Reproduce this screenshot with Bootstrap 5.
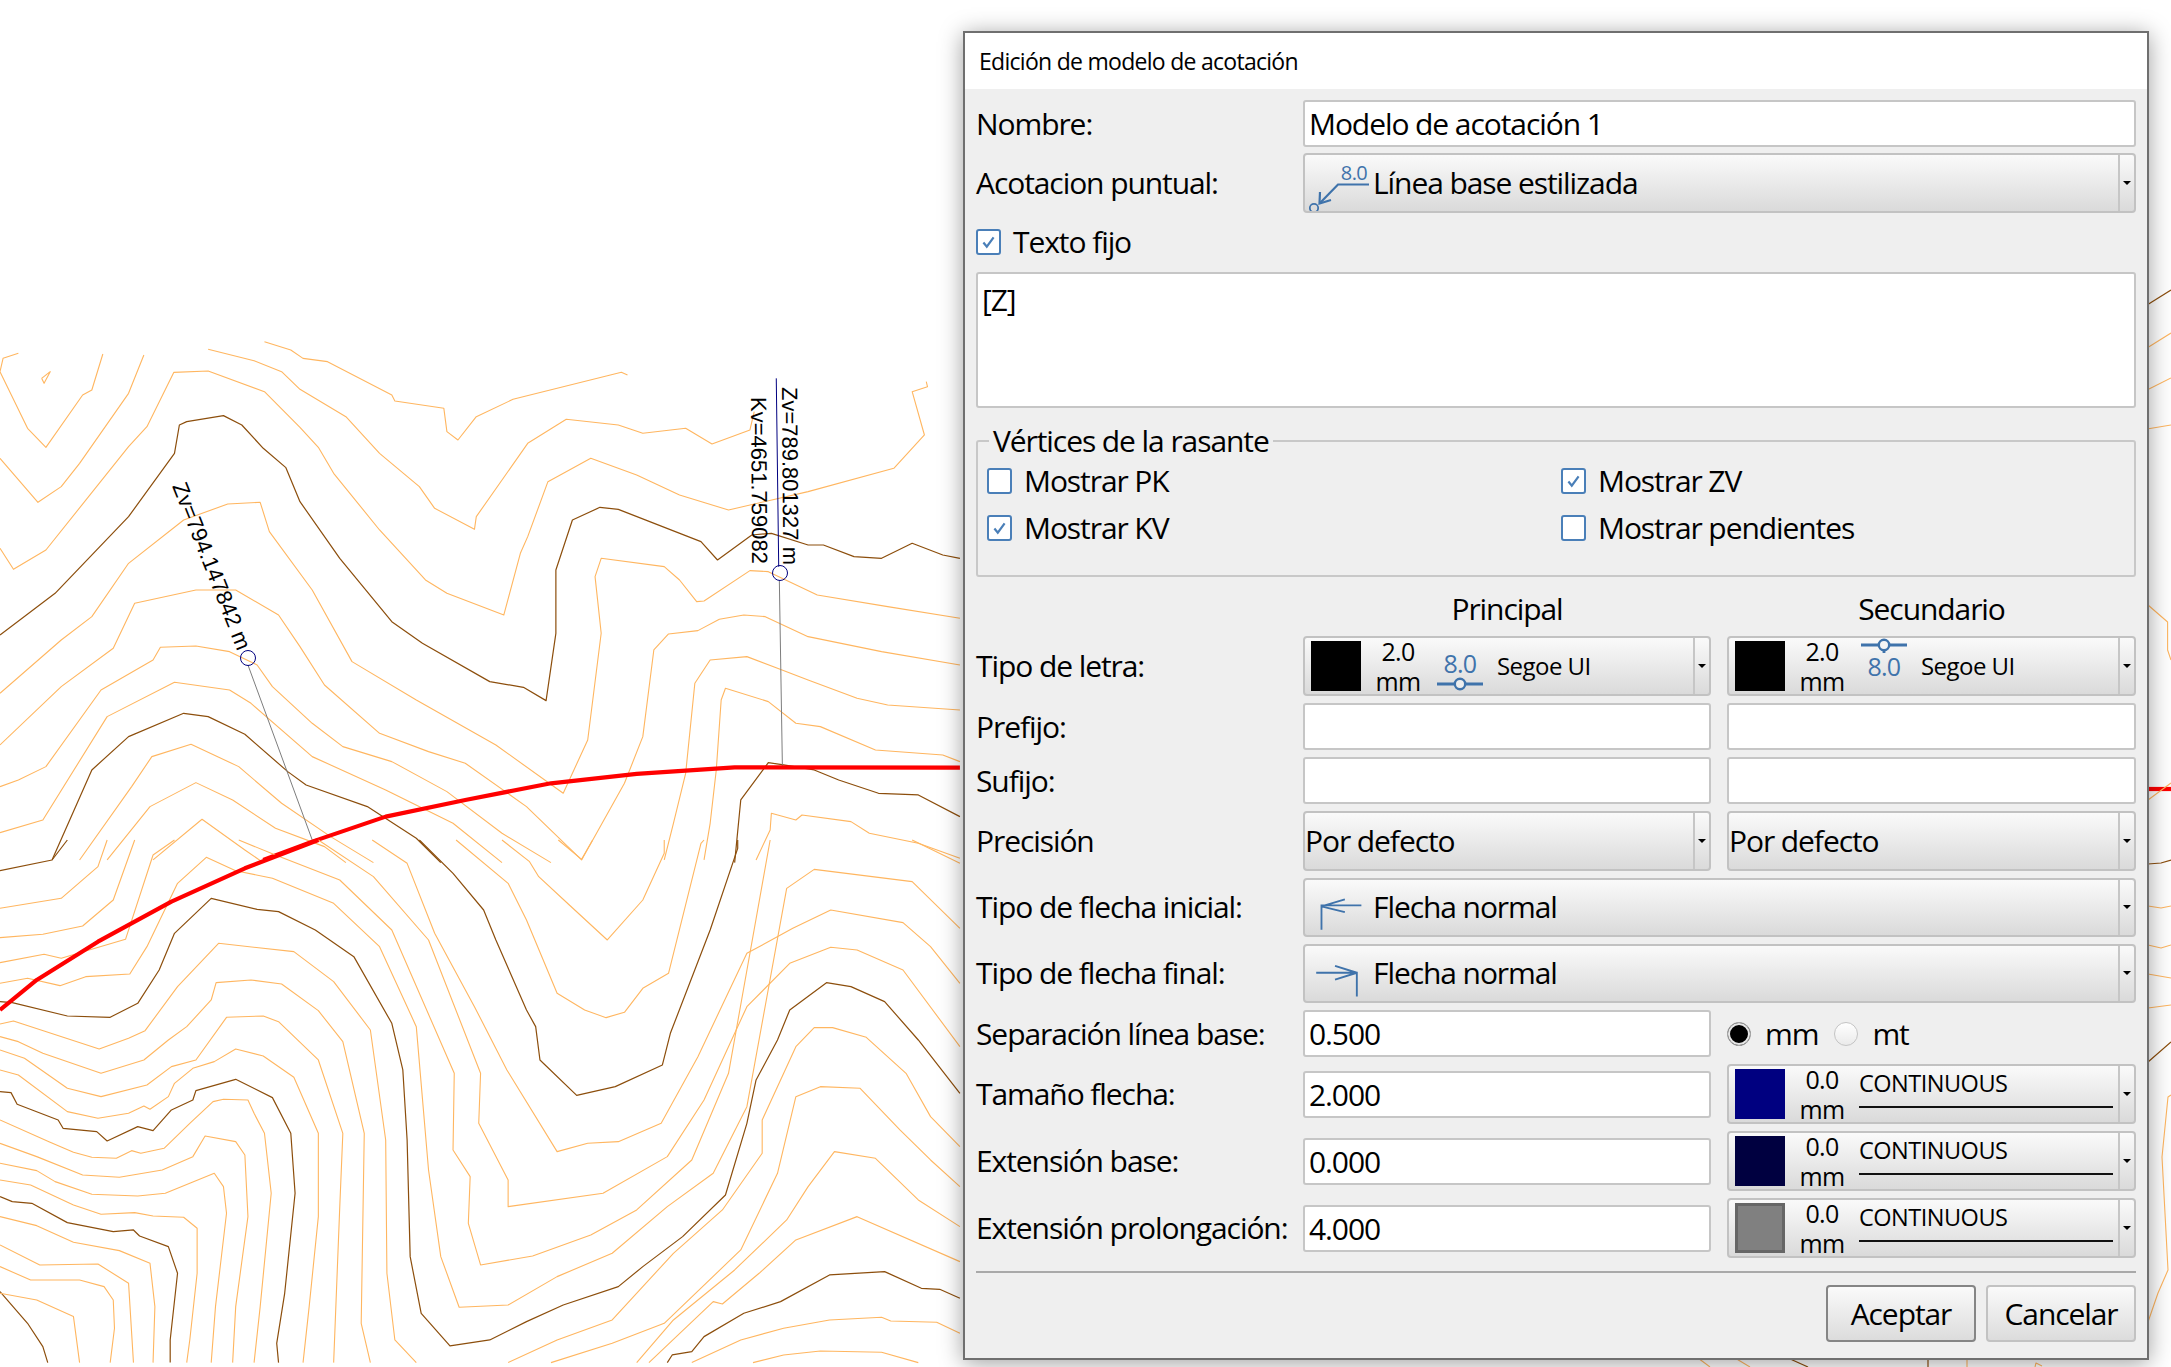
<!DOCTYPE html>
<html lang="es">
<head>
  <meta charset="UTF-8" />
  <title>Edición de modelo de acotación</title>
  <link href="https://cdn.jsdelivr.net/npm/bootstrap@5.3.2/dist/css/bootstrap.min.css" rel="stylesheet">
  <style>
    html, body { margin: 0; height: 1367px; background: #fff; overflow: hidden; }
    body { position: relative; font-family: "Open Sans", "Noto Sans", sans-serif; color: #000; }

    /* plano de fondo */
    .map-canvas { position: absolute; left: 0; top: 0; width: 2171px; height: 1367px; }
    .map-canvas polyline, .map-canvas line { fill: none; vector-effect: non-scaling-stroke; stroke-linejoin: round; }
    .cn { stroke: #ffb660; stroke-width: 1.1; }
    .cb { stroke: #8c4e0c; stroke-width: 1.2; }
    .red-axis { stroke: #f00; stroke-width: 4.2; }
    .leader { stroke: #7d7d7d; stroke-width: 1; }
    .leader-navy { stroke: #000080; stroke-width: 1; }
    .map-txt { font-family: "Liberation Sans", Arial, sans-serif; font-size: 22px; fill: #000; }

    /* ventana */
    .win-shell { position: absolute; left: 963px; top: 31px; width: 1186px; height: 1329px; background: #efefef; border: 2px solid #6f6f6f; box-shadow: 0 3px 22px rgba(0,0,0,.38); }
    .win-title { height: 56px; background: #fff; padding-left: 14px; font-size: 23px; letter-spacing: -.72px; }
    .win-body { padding: 11px 11px 0; font-size: 30px; letter-spacing: -1.08px; line-height: 1; }
    .top-row { display: flex; align-items: center; }
    .top-row > .fld-label { width: 327px; flex: none; }
    .h-input { height: 47px; }
    .h-combo { height: 60px; }

    .form-control.qt-input { height: 100%; min-height: 0; padding: 0 4px; border: 2px solid #c6c6c6; border-radius: 3px; font-size: 30px; letter-spacing: -1.08px; line-height: 1; color: #000; background: #fff; box-shadow: none; }
    .form-control.qt-text { height: 136px; padding: 11px 4px; resize: none; }

    .btn.combo-btn { width: 100%; height: 100%; padding: 0; border: 2px solid #c2c2c2; border-radius: 4px; background: linear-gradient(#fafafa, #dadada); color: #000; font-size: 30px; letter-spacing: -1.08px; line-height: 1; text-align: left; overflow: hidden; }
    .combo-arrow { margin-left: auto; width: 16px; height: 100%; flex: none; border-left: 2px solid #c6c6c6; display: flex; align-items: center; justify-content: center; }
    .combo-arrow::after { content: ""; border-top: 4px solid #000; border-left: 4px solid transparent; border-right: 4px solid transparent; }
    .combo-plain { padding-left: 4px; }
    .icon-box { width: 68px; flex: none; height: 100%; }
    .smp-swatch { width: 50px; height: 50px; flex: none; margin-left: 6px; }
    .sw-black { background: #000; }
    .sw-navy { background: #000080; }
    .sw-dark { background: #000040; }
    .sw-gray { background: #808080; border: 3px solid #666; }
    .size-stack { width: 74px; flex: none; text-align: center; font-size: 25px; letter-spacing: -.7px; line-height: 30px; }
    .font-name { font-size: 24px; letter-spacing: -.55px; margin-left: 12px; }
    .lt-cell { flex: 1; height: 100%; padding: 4px 5px 0 0; font-size: 23.5px; letter-spacing: -.5px; line-height: 26px; }
    .lt-stroke { height: 2px; background: #111; margin-top: 10px; }

    .form-check-input.qt-check { width: 25px; height: 26px; margin: 0; flex: none; border: 2px solid #4a7fb8; border-radius: 3px; background-color: #fff; }
    .form-check-input.qt-check:checked { background-color: #fff; background-size: 80%; background-image: url("data:image/svg+xml,%3csvg xmlns='http://www.w3.org/2000/svg' viewBox='0 0 20 20'%3e%3cpath fill='none' stroke='%234a7fb8' stroke-width='2.6' d='M4 10l4 5 8-11'/%3e%3c/svg%3e"); }
    .form-check-input.qt-radio { width: 24px; height: 24px; margin: 0; flex: none; border: 1px solid #c4c4c4; background: linear-gradient(#fff, #eaeaea); }
    .form-check-input.qt-radio:checked { border: 1px solid #aaa; background: #000; box-shadow: inset 0 0 0 2px #e6e6e6; }

    .rasante-box { border: 2px solid #c8c8c8; border-radius: 3px; margin: 18px 0 0; padding: 0 0 0 9px; height: 151px; }
    .rasante-box legend { float: none; width: auto; margin: 0 0 0 2px; padding: 0 4px; font-size: 30px; letter-spacing: -1.08px; line-height: 30px; }
    .chk-line { display: flex; align-items: center; gap: 12px; height: 26px; }

    .lower-grid { display: grid; margin-top: 12px; grid-template-columns: 327px 408px 16px 1fr; grid-template-rows: 40px 60px 47px 47px 60px 58.5px 59.5px 47px 60px 60px 60px; row-gap: 7px; align-items: center; }
    .col-a { grid-column: 2; }
    .col-b { grid-column: 4; }
    .col-ab { grid-column: 2 / 5; }
    .fill-cell { height: 100%; }

    hr.win-sep { margin: 13px 0 12px; border: 0; border-top: 2px solid #a9a9a9; opacity: 1; }
    .btn.qt-btn { width: 150px; height: 57px; padding: 0; border: 2px solid #c2c2c2; border-radius: 4px; background: linear-gradient(#fafafa, #dcdcdc); color: #000; font-size: 30px; letter-spacing: -1.08px; line-height: 1; }
    .btn.qt-btn.qt-default { border-color: #858585; }
  </style>
</head>
<body>

  <svg class="map-canvas" viewBox="0 0 2171 1367">
    <!-- tramo superior -->
    <g transform="translate(0 340) scale(.6122 .3333)">
      <polyline class="cn" points="0,95 45,265 75,322 135,165 150,150 168,42"/>
      <polyline class="cn" points="68,115 82,95 72,130 68,115"/>
      <polyline class="cn" points="30,40 5,55 0,95"/>
      <polyline class="cn" points="0,355 62,487 100,440 130,370 210,160 235,45"/>
      <polyline class="cn" points="0,625 22,688 75,630 210,320 240,260 284,97 340,93 432,155 490,262 520,322 545,400 620,570 695,720 730,760 823,825 850,640 862,590 895,425 965,355 1040,405 1110,465 1190,510 1320,455 1460,385 1510,285 1490,155 1515,140 1513,125"/>
      <polyline class="cn" points="340,28 415,62 460,95 490,148 565,230 620,340 685,440 710,505 775,568 778,530 862,310 925,238 1010,255 1050,280 1120,265 1163,312 1225,270 1232,215"/>
      <polyline class="cn" points="432,5 475,30 495,55 535,65 640,165 645,183 725,205 730,275 748,300 778,230 838,178 1015,97 1025,105"/>
      <polyline class="cb" points="0,885 90,760 210,530 285,340 293,255 305,245 365,227 395,255 430,325 467,383 490,485 555,655 640,845 690,910 800,1025 855,1042 892,1082 908,880 908,690 935,540 980,502 1010,508 1145,605 1172,660 1228,585 1260,580 1320,615 1345,615 1395,650 1440,655 1490,610 1540,645 1568,655"/>
      <polyline class="cn" points="0,1060 100,900 150,830 210,670 300,540 372,492 425,487 440,575 510,750 575,965 680,1080 810,1215 920,1360 960,1200 982,880 972,710 982,655 1085,680 1110,720 1138,785 1150,783 1225,692 1255,695 1335,765 1450,800 1568,835"/>
      <polyline class="cn" points="0,1215 100,1040 185,925 220,790 320,750 385,750 455,825 490,920 530,1035 620,1180 700,1235 760,1270 860,1400 950,1560 1020,1330 1050,1190 1068,930 1092,882 1140,872 1175,838 1215,825 1250,830 1320,890 1440,935 1568,975"/>
      <polyline class="cn" points="0,1340 30,1320 75,1280 165,1050 250,960 262,922 320,918 375,935 420,975 445,1040 510,1150 560,1220 640,1265 730,1355 820,1480 900,1568"/>
      <polyline class="cn" points="0,1478 70,1440 175,1130 285,1027 375,1050 410,1090 510,1250 630,1350 740,1450 820,1568"/>
      <polyline class="cb" points="85,1560 150,1290 210,1190 300,1120 340,1130 400,1183 470,1295 500,1335 600,1400 680,1495 720,1568"/>
      <polyline class="cn" points="130,1560 215,1340 248,1250 312,1213 390,1280 460,1390 540,1490 610,1568"/>
      <polyline class="cn" points="175,1560 245,1400 320,1328 380,1380 450,1465 530,1520 565,1568"/>
      <polyline class="cn" points="250,1560 330,1438 400,1530 430,1568"/>
      <polyline class="cn" points="1085,1560 1100,1450 1120,1300 1135,1030 1160,960 1220,950 1270,985 1320,1020 1400,1075 1450,1095 1568,1110"/>
      <polyline class="cn" points="1150,1560 1160,1450 1170,1290 1178,1080 1185,1045 1255,1085 1300,1150 1340,1160 1430,1230 1540,1245 1568,1265"/>
      <polyline class="cb" points="1200,1568 1210,1380 1255,1268 1280,1275 1330,1290 1370,1320 1435,1360 1500,1365 1568,1430"/>
      <polyline class="cn" points="1235,1560 1258,1470 1260,1420 1300,1440 1310,1425 1390,1445 1420,1480 1500,1510 1568,1555"/>
      <polyline class="leader" points="405,975 510,1500"/>
      <polyline class="leader" points="1273,720 1278,1280"/>
      <polyline class="leader-navy" points="1268,115 1272,680"/>
      <polyline class="red-axis" points="430,1560 510,1505 630,1430 760,1380 900,1330 1040,1302 1200,1282 1568,1283"/>
    </g>
    <!-- tramo inferior -->
    <g transform="translate(0 840) scale(.6122 .3333)">
      <polyline class="cb" points="0,92 85,60 110,0"/>
      <polyline class="cn" points="0,205 100,175 160,80 175,0"/>
      <polyline class="cn" points="0,293 70,283 135,258 185,180 220,0"/>
      <polyline class="cn" points="0,368 72,343 100,355 205,298 250,45 285,0"/>
      <polyline class="cn" points="0,430 45,415 98,437 140,410 212,402 240,320 290,130 337,52 385,92 445,115 545,190 620,320 680,560 700,990 720,1250 750,1402 830,1395 910,1310 1000,1240 1090,1100 1165,1000 1220,800 1285,145 1330,88 1490,125 1568,265"/>
      <polyline class="cb" points="0,485 20,488 110,528 180,532 225,490 260,390 285,280 345,175 420,208 455,215 515,270 578,350 640,550 658,690 665,900 670,1250 688,1420 735,1518 800,1500 860,1445 920,1395 1010,1340 1050,1280 1115,1190 1185,1065 1220,850 1235,720 1270,600 1290,510 1350,428 1390,440 1445,485 1500,600 1568,760"/>
      <polyline class="cn" points="0,552 22,543 162,627 210,595 237,572 290,440 357,310 480,335 545,425 605,570 630,900 632,1300 645,1500 680,1568"/>
      <polyline class="cn" points="0,590 30,605 70,640 165,700 235,660 275,600 305,560 345,480 353,428 410,420 460,432 520,512 560,605 595,880 590,1450 605,1568"/>
      <polyline class="cn" points="0,630 40,655 110,745 165,770 240,735 280,680 320,660 370,532 430,528 455,545 520,660 560,880 555,1100 545,1568"/>
      <polyline class="cn" points="0,690 30,705 110,815 160,835 210,820 235,798 245,808 275,770 285,730 315,685 350,665 385,627 430,648 480,712 520,880 520,1130 505,1400 495,1568"/>
      <polyline class="cb" points="0,755 18,758 28,793 95,840 103,865 158,875 175,903 225,860 250,872 280,810 315,780 320,752 385,718 445,773 475,880 482,1060 465,1360 452,1510 455,1568"/>
      <polyline class="cn" points="0,840 80,905 120,937 150,952 190,955 215,932 230,940 268,925 310,850 348,785 365,778 405,780 415,820 432,880 443,1060 425,1400 415,1568"/>
      <polyline class="cn" points="0,910 60,950 135,1005 195,1012 265,990 315,950 335,888 385,905 400,945 405,1130 385,1400 380,1568"/>
      <polyline class="cn" points="0,970 60,992 90,1025 150,1063 225,1068 270,1060 350,1000 365,1040 370,1120 352,1400 345,1568"/>
      <polyline class="cn" points="0,1020 50,1035 120,1095 165,1123 220,1118 250,1128 300,1132 322,1165 322,1300 310,1500 305,1568"/>
      <polyline class="cb" points="0,1070 20,1085 52,1090 110,1148 185,1175 218,1170 228,1188 275,1220 290,1300 278,1500 278,1568"/>
      <polyline class="cn" points="0,1130 60,1157 120,1207 195,1232 245,1270 253,1400 250,1568"/>
      <polyline class="cn" points="0,1215 65,1275 160,1272 210,1330 218,1568"/>
      <polyline class="cn" points="0,1280 50,1320 130,1320 170,1340 185,1380 187,1465 180,1568"/>
      <polyline class="cb" points="0,1355 45,1450 70,1520 78,1568"/>
      <polyline class="cn" points="0,1360 60,1380 120,1430 130,1568"/>
      <polyline class="cb" points="685,0 740,100 790,210 810,300 860,510 875,560 882,660 942,766 1005,740 1082,675 1095,580 1160,270 1205,25 1205,0"/>
      <polyline class="cn" points="745,0 830,130 860,240 910,460 955,510 990,533 1020,517 1050,445 1092,400 1145,10 1150,0"/>
      <polyline class="cn" points="820,0 865,65 880,110 930,195 992,300 1050,180 1085,40 1085,0"/>
      <polyline class="cn" points="912,0 950,58 968,0"/>
      <polyline class="cn" points="608,0 665,70 710,280 775,500 828,690 910,935 960,910 1010,905 1080,850 1140,650 1220,340 1295,265 1357,210 1475,248 1520,320 1568,430"/>
      <polyline class="cn" points="520,0 610,110 700,300 785,700 782,850 830,1020 830,1100 985,1060 1090,950 1150,780 1220,500 1290,370 1357,322 1400,330 1475,390 1568,620"/>
      <polyline class="cn" points="390,0 450,45 555,120 640,270 742,700 740,930 768,1010 765,1150 785,1275 870,1248 965,1185 1040,1110 1130,960 1190,700 1258,0"/>
      <polyline class="cn" points="830,1568 910,1500 1000,1440 1100,1240 1180,1110 1245,940 1245,840 1300,620 1330,563 1360,563 1415,592 1480,700 1520,830 1568,920"/>
      <polyline class="cn" points="900,1568 1000,1510 1085,1450 1210,1230 1270,1000 1300,770 1340,740 1405,745 1470,870 1520,960 1568,1040"/>
      <polyline class="cn" points="1040,1568 1100,1440 1200,1290 1285,1140 1320,1040 1363,935 1430,955 1500,1080 1568,1160"/>
      <polyline class="cn" points="1060,1568 1165,1385 1180,1392 1240,1300 1300,1200 1400,1130 1568,1265"/>
      <polyline class="cb" points="1090,1568 1098,1545 1130,1535 1150,1490 1215,1420 1275,1385 1355,1305 1445,1295 1505,1345 1535,1348 1568,1375"/>
      <polyline class="cn" points="1130,1568 1210,1500 1280,1465 1355,1440 1440,1432 1455,1443 1530,1447 1568,1480"/>
      <polyline class="cn" points="1230,1568 1280,1545 1340,1533 1440,1537 1500,1568"/>
      <polyline class="cn" points="1490,0 1568,70"/>
      <polyline class="red-axis" points="0,510 60,420 160,305 280,185 400,85 520,0"/>
    </g>
    <!-- detras de la ventana, a la derecha -->
    <g>
      <polyline class="cb" points="2147,305 2171,290"/>
      <polyline class="cn" points="2147,348 2171,333"/>
      <polyline class="cn" points="2147,390 2171,378"/>
      <polyline class="cn" points="2147,429 2171,425"/>
      <polyline class="cn" points="2148,605 2167.6,622 2167.6,650 2171,660"/>
      <polyline class="red-axis" points="2148,789 2171,789"/>
      <polyline class="cn" points="2148,800 2171,783"/>
      <polyline class="cb" points="2148,864 2161,863 2171,860"/>
      <polyline class="cn" points="2148,906 2161,908 2171,906"/>
      <polyline class="cn" points="2148,945 2161,948 2171,945"/>
      <polyline class="cn" points="2148,974 2171,978"/>
      <polyline class="cn" points="2148,1008 2171,1005"/>
      <polyline class="cb" points="2148,1072 2148,1062 2171,1042"/>
      <polyline class="cn" points="2171,1095 2168,1097 2162,1157 2168,1270 2158,1293 2148,1322"/>
      <polyline class="cn" points="1698,1358 1710,1367"/>
      <polyline class="cn" points="1735,1358 1750,1367"/>
      <polyline class="cb" points="1788,1358 1808,1367"/>
      <polyline class="cb" points="1928,1358 1928,1367"/>
      <polyline class="cn" points="1967,1358 1967,1367"/>
      <polyline class="cn" points="2035,1367 2036,1363 2042,1366"/>
    </g>
    <ellipse cx="248" cy="658" rx="7.5" ry="7.5" fill="none" stroke="#000080" stroke-width="1"/>
    <ellipse cx="780" cy="573" rx="7.5" ry="7.5" fill="none" stroke="#000080" stroke-width="1"/>
    <text class="map-txt" transform="translate(172 486) rotate(68.4)">Zv=794.147842 m</text>
    <text class="map-txt" transform="translate(782 387) rotate(89.6)">Zv=789.801327 m</text>
    <text class="map-txt" transform="translate(751 397) rotate(89.6)">Kv=4651.759082</text>
  </svg>

  <div class="win-shell">
    <div class="win-title d-flex align-items-center">Edición de modelo de acotación</div>
    <div class="win-body">
      <div class="top-row h-input mb-0">
        <label class="fld-label">Nombre:</label>
        <input class="form-control qt-input" value="Modelo de acotación 1">
      </div>
      <div class="top-row h-combo gap-top">
        <label class="fld-label">Acotacion puntual:</label>
        <button type="button" class="btn combo-btn d-flex align-items-center">
          <svg class="icon-box" viewBox="0 0 68 56">
            <text x="49" y="25" text-anchor="middle" font-size="20" fill="#3f73ab" font-family="Open Sans" letter-spacing="-.6">8.0</text>
            <path d="M64 29.5H33L15 48" fill="none" stroke="#3f73ab" stroke-width="2.2"/>
            <path d="M15 37L14.5 48.5 26 45" fill="none" stroke="#3f73ab" stroke-width="2.2"/>
            <circle cx="9" cy="53" r="4.2" fill="none" stroke="#3f73ab" stroke-width="1.8"/>
          </svg>
          <span>Línea base estilizada</span>
          <span class="combo-arrow"></span>
        </button>
      </div>
      <div class="chk-line check-fixed">
        <input class="form-check-input qt-check" type="checkbox" checked>
        <span>Texto fijo</span>
      </div>
      <textarea class="form-control qt-input qt-text">[Z]</textarea>

      <fieldset class="rasante-box">
        <legend>Vértices de la rasante</legend>
        <div class="row g-0 chk-grid">
          <div class="col-6 chk-line"><input class="form-check-input qt-check" type="checkbox"><span>Mostrar PK</span></div>
          <div class="col-6 chk-line"><input class="form-check-input qt-check" type="checkbox" checked><span>Mostrar ZV</span></div>
          <div class="col-6 chk-line chk-second"><input class="form-check-input qt-check" type="checkbox" checked><span>Mostrar KV</span></div>
          <div class="col-6 chk-line chk-second"><input class="form-check-input qt-check" type="checkbox"><span>Mostrar pendientes</span></div>
        </div>
      </fieldset>

      <div class="lower-grid">
        <div></div>
        <div class="col-a text-center">Principal</div>
        <div class="col-b text-center">Secundario</div>

        <label>Tipo de letra:</label>
        <div class="col-a fill-cell">
          <button type="button" class="btn combo-btn d-flex align-items-center">
            <span class="smp-swatch sw-black"></span>
            <span class="size-stack">2.0<br>mm</span>
            <svg width="50" height="56" viewBox="0 0 50 56" class="flex-none">
              <text x="25" y="35" text-anchor="middle" font-size="25" fill="#3f73ab" font-family="Open Sans" letter-spacing="-.8">8.0</text>
              <path d="M2 46H48M25 40v4" fill="none" stroke="#3f73ab" stroke-width="2.8"/>
              <circle cx="25" cy="46" r="5.2" fill="#eee" stroke="#3f73ab" stroke-width="2.4"/>
            </svg>
            <span class="font-name">Segoe UI</span>
            <span class="combo-arrow"></span>
          </button>
        </div>
        <div class="col-b fill-cell">
          <button type="button" class="btn combo-btn d-flex align-items-center">
            <span class="smp-swatch sw-black"></span>
            <span class="size-stack">2.0<br>mm</span>
            <svg width="50" height="56" viewBox="0 0 50 56" class="flex-none">
              <path d="M2 7H48M25 9v6" fill="none" stroke="#3f73ab" stroke-width="2.8"/>
              <circle cx="25" cy="7" r="5.2" fill="#f4f4f4" stroke="#3f73ab" stroke-width="2.4"/>
              <text x="25" y="38" text-anchor="middle" font-size="25" fill="#3f73ab" font-family="Open Sans" letter-spacing="-.8">8.0</text>
            </svg>
            <span class="font-name">Segoe UI</span>
            <span class="combo-arrow"></span>
          </button>
        </div>

        <label>Prefijo:</label>
        <div class="col-a fill-cell"><input class="form-control qt-input"></div>
        <div class="col-b fill-cell"><input class="form-control qt-input"></div>

        <label>Sufijo:</label>
        <div class="col-a fill-cell"><input class="form-control qt-input"></div>
        <div class="col-b fill-cell"><input class="form-control qt-input"></div>

        <label>Precisión</label>
        <div class="col-a fill-cell">
          <button type="button" class="btn combo-btn d-flex align-items-center combo-plain"><span>Por defecto</span><span class="combo-arrow"></span></button>
        </div>
        <div class="col-b fill-cell">
          <button type="button" class="btn combo-btn d-flex align-items-center combo-plain"><span>Por defecto</span><span class="combo-arrow"></span></button>
        </div>

        <label>Tipo de flecha inicial:</label>
        <div class="col-ab fill-cell">
          <button type="button" class="btn combo-btn d-flex align-items-center">
            <svg class="icon-box" viewBox="0 0 68 56">
              <path d="M16 51V26H57M16 27L40 20M16 27L40 33" fill="none" stroke="#3f73ab" stroke-width="1.9"/>
            </svg>
            <span>Flecha normal</span>
            <span class="combo-arrow"></span>
          </button>
        </div>

        <label>Tipo de flecha final:</label>
        <div class="col-ab fill-cell">
          <button type="button" class="btn combo-btn d-flex align-items-center">
            <svg class="icon-box" viewBox="0 0 68 56">
              <path d="M11 27H52V51M52 27L30 20M52 27L30 34" fill="none" stroke="#3f73ab" stroke-width="1.9"/>
            </svg>
            <span>Flecha normal</span>
            <span class="combo-arrow"></span>
          </button>
        </div>

        <label>Separación línea base:</label>
        <div class="col-a fill-cell"><input class="form-control qt-input" value="0.500"></div>
        <div class="col-b d-flex align-items-center radio-cell">
          <input class="form-check-input qt-radio" type="radio" name="unidad" checked>
          <span class="ms-unit">mm</span>
          <input class="form-check-input qt-radio" type="radio" name="unidad">
          <span class="ms-unit">mt</span>
        </div>

        <label>Tamaño flecha:</label>
        <div class="col-a"><div class="h-input"><input class="form-control qt-input" value="2.000"></div></div>
        <div class="col-b fill-cell">
          <button type="button" class="btn combo-btn d-flex align-items-center">
            <span class="smp-swatch sw-navy"></span>
            <span class="size-stack">0.0<br>mm</span>
            <span class="lt-cell"><span class="d-block">CONTINUOUS</span><span class="lt-stroke d-block"></span></span>
            <span class="combo-arrow"></span>
          </button>
        </div>

        <label>Extensión base:</label>
        <div class="col-a"><div class="h-input"><input class="form-control qt-input" value="0.000"></div></div>
        <div class="col-b fill-cell">
          <button type="button" class="btn combo-btn d-flex align-items-center">
            <span class="smp-swatch sw-dark"></span>
            <span class="size-stack">0.0<br>mm</span>
            <span class="lt-cell"><span class="d-block">CONTINUOUS</span><span class="lt-stroke d-block"></span></span>
            <span class="combo-arrow"></span>
          </button>
        </div>

        <label>Extensión prolongación:</label>
        <div class="col-a"><div class="h-input"><input class="form-control qt-input" value="4.000"></div></div>
        <div class="col-b fill-cell">
          <button type="button" class="btn combo-btn d-flex align-items-center">
            <span class="smp-swatch sw-gray"></span>
            <span class="size-stack">0.0<br>mm</span>
            <span class="lt-cell"><span class="d-block">CONTINUOUS</span><span class="lt-stroke d-block"></span></span>
            <span class="combo-arrow"></span>
          </button>
        </div>
      </div>

      <hr class="win-sep">
      <div class="d-flex justify-content-end btn-strip">
        <button type="button" class="btn qt-btn qt-default">Aceptar</button>
        <button type="button" class="btn qt-btn">Cancelar</button>
      </div>
    </div>
  </div>

  <style>
    .gap-top { margin-top: 6px; }
    .check-fixed { margin: 16px 0 17px; }
    .chk-grid { width: 1148px; margin-top: 12px; row-gap: 21px; }
    .chk-second { margin-top: 0; }
    .flex-none { flex: none; }
    .ms-unit { margin: 0 16px 0 14px; }
    .btn-strip { gap: 10px; }
    .radio-cell { padding-left: 0; }
  </style>
  <script src="https://cdn.jsdelivr.net/npm/bootstrap@5.3.2/dist/js/bootstrap.bundle.min.js"></script>
</body>
</html>
